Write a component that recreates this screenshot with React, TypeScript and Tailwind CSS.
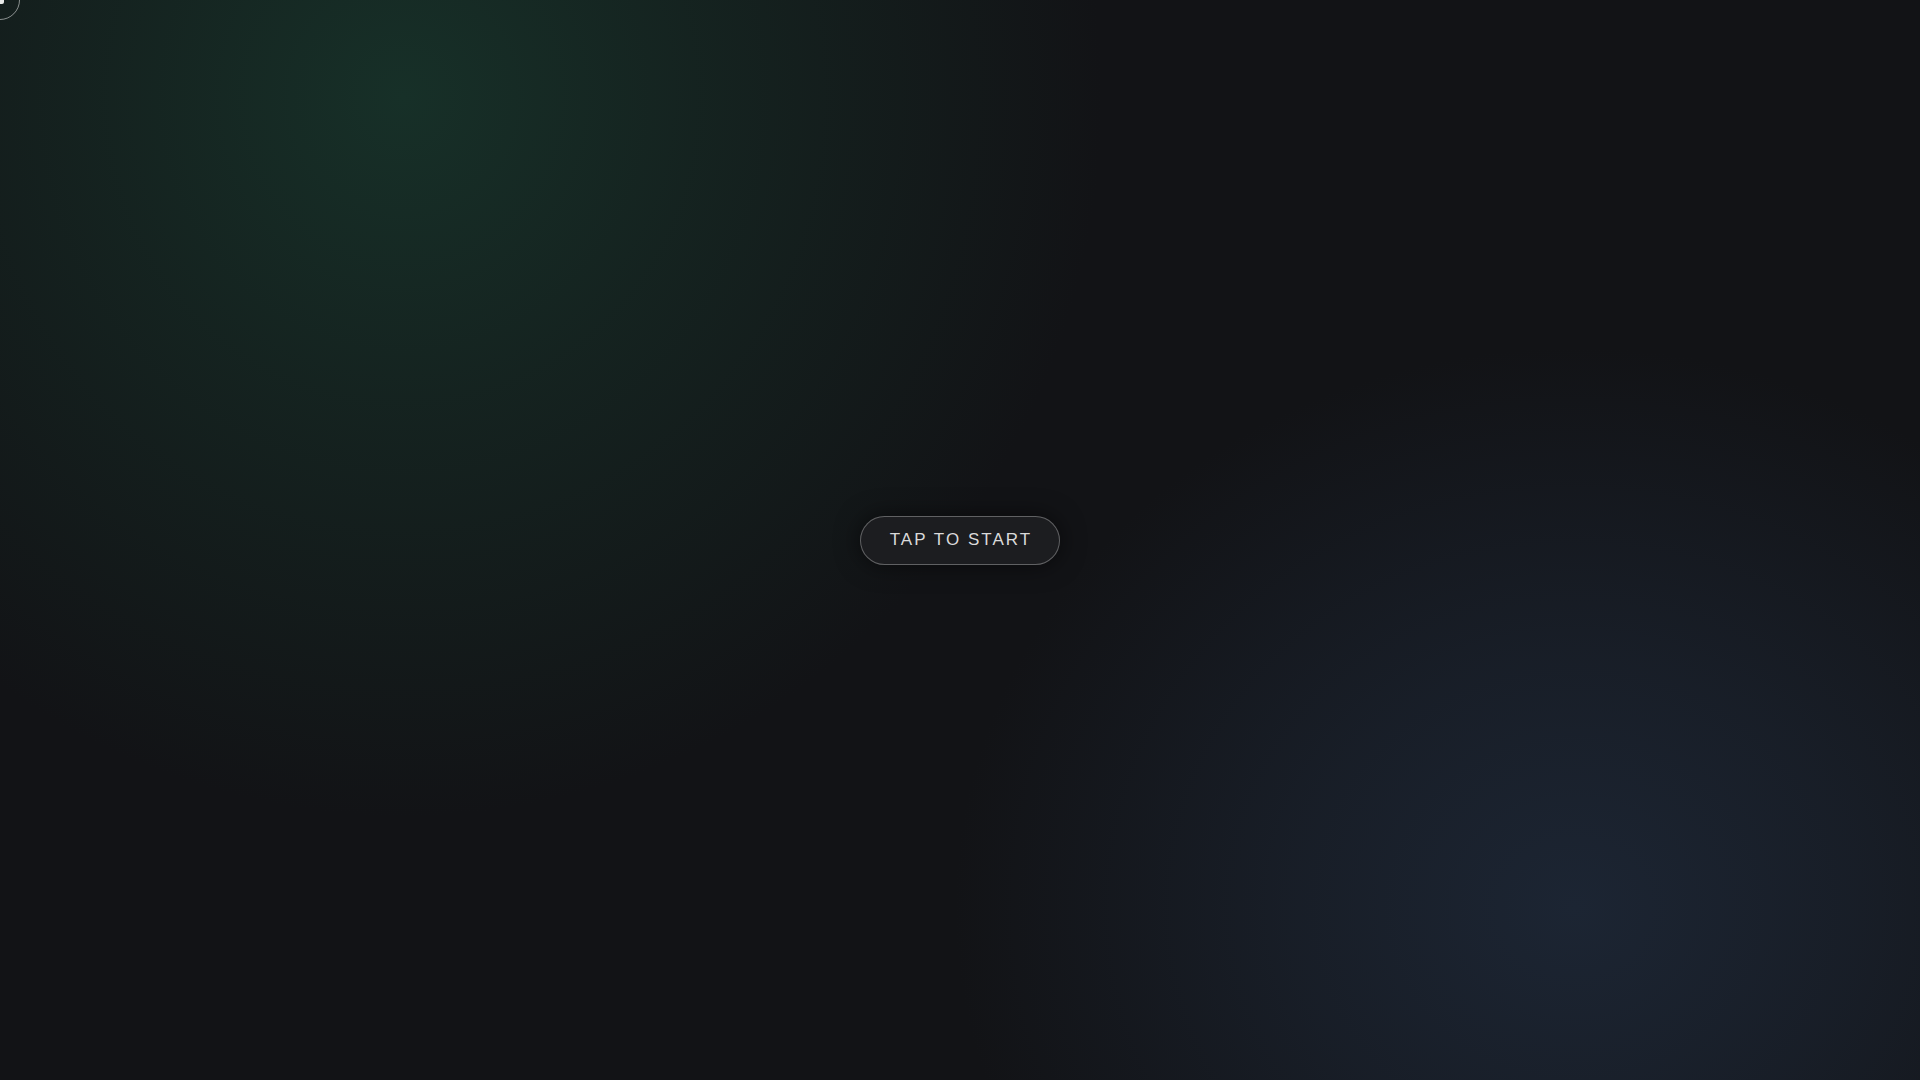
import React from "react";

export default function App() {
  return (
    <div
      className="relative w-full h-screen overflow-hidden bg-[#121316] bg-[radial-gradient(700px_720px_at_21%_9%,rgba(23,48,40,1)_0%,rgba(23,48,40,0.55)_42%,rgba(23,48,40,0)_100%),radial-gradient(620px_560px_at_82%_84%,rgba(28,37,51,1)_0%,rgba(28,37,51,0.6)_45%,rgba(28,37,51,0)_100%)] flex items-center justify-center"
      style={{ fontFamily: '"Liberation Sans", Arial, sans-serif' }}
    >
      <div className="absolute -top-5 -left-5 w-10 h-10 rounded-full border border-white/50 flex items-center justify-center">
        <div className="w-2 h-2 rounded-[2px] bg-white/90" />
      </div>
      <button className="h-[49px] w-[200px] rounded-full border border-white/30 bg-[#1c1d20] text-[#dadada] text-[17px] tracking-[0.12em] pl-[2px] shadow-[0_0_24px_rgba(0,0,0,0.55)]">
        TAP TO START
      </button>
    </div>
  );
}
